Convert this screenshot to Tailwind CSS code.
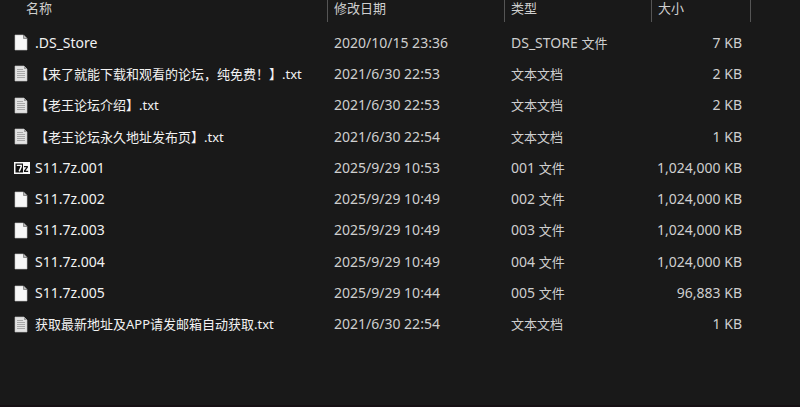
<!DOCTYPE html>
<html lang="zh-CN">
<head>
    <meta charset="UTF-8">
    <meta name="viewport" content="width=device-width, initial-scale=1.0">
    <title>文件列表</title>
    <script src="https://cdn.jsdelivr.net/npm/@tailwindcss/browser@4"></script>
</head>
<body class="min-h-screen bg-[#191919] border-b-2 border-[#161014] text-[#cfcfcf] font-['Noto_Sans','Noto_Sans_CJK_SC',sans-serif]">
    <!-- Icons -->
    <svg class="hidden">
        <symbol id="icon-file" viewBox="0 0 14 17">
            <path d="M1 1h8.5L13 4.5V16H1z" fill="#f7f7f7" stroke="#c4c4c4" stroke-width=".6"/>
            <path d="M9.5 1v3.5H13z" fill="#b5b5b5"/>
            <path d="M9.5 1v3.5H13" fill="none" stroke="#707070" stroke-width=".7"/>
        </symbol>
        <symbol id="icon-text" viewBox="0 0 14 17">
            <path d="M1 1h9l3 3v12H1z" fill="#e2e2e2" stroke="#c4c4c4" stroke-width=".6"/>
            <path d="M10 1v3h3z" fill="#999"/>
            <path d="M3 4.5h6M3 6.5h8M3 8.5h8M3 10.5h8M3 12.5h8" stroke="#a2a2a2" stroke-width=".9"/>
        </symbol>
        <symbol id="icon-7z" viewBox="0 0 16 12">
            <path d="M0 0h16v12H0z" fill="#f8f8f8"/>
            <path d="M1.5 1.5h7.5v9H1.5z" fill="#111"/>
            <path d="M2.8 3.4h4.4v1.4L5.2 9.4" fill="none" stroke="#fff" stroke-width="1.4"/>
            <path d="M10 4.7h3.2v.6L10.6 8.8v.6h3.6" fill="none" stroke="#111" stroke-width="1.3"/>
        </symbol>
    </svg>

    <table class="w-full h-[340px] table-fixed text-sm leading-5 whitespace-nowrap">
        <colgroup>
            <col class="w-[328px]">
            <col class="w-[177px]">
            <col class="w-[147px]">
            <col class="w-[99px]">
            <col>
        </colgroup>
        <thead class="text-[13px] text-left">
            <tr class="h-[27px]">
                <th class="p-0 align-top font-normal"><div class="h-[22px] pl-[26px] pb-1.5 flex items-center border-r border-[#555]">名称</div></th>
                <th class="p-0 align-top font-normal"><div class="h-[22px] pl-1.5 pb-1.5 flex items-center border-r border-[#555]">修改日期</div></th>
                <th class="p-0 align-top font-normal"><div class="h-[22px] pl-1.5 pb-1.5 flex items-center border-r border-[#555]">类型</div></th>
                <th class="p-0 align-top font-normal"><div class="h-[22px] pl-1.5 pb-1.5 flex items-center border-r border-[#555]">大小</div></th>
                <td></td>
            </tr>
        </thead>
        <tbody id="fileList"></tbody>
    </table>

    <script>
        const files = [
            { icon: 'file', name: '.DS_Store', date: '2020/10/15 23:36', ext: 'DS_STORE', kind: '文件', size: '7 KB' },
            { icon: 'text', name: '【来了就能下载和观看的论坛，纯免费！】.txt', date: '2021/6/30 22:53', ext: '', kind: '文本文档', size: '2 KB' },
            { icon: 'text', name: '【老王论坛介绍】.txt', date: '2021/6/30 22:53', ext: '', kind: '文本文档', size: '2 KB' },
            { icon: 'text', name: '【老王论坛永久地址发布页】.txt', date: '2021/6/30 22:54', ext: '', kind: '文本文档', size: '1 KB' },
            { icon: '7z', name: 'S11.7z.001', date: '2025/9/29 10:53', ext: '001', kind: '文件', size: '1,024,000 KB' },
            { icon: 'file', name: 'S11.7z.002', date: '2025/9/29 10:49', ext: '002', kind: '文件', size: '1,024,000 KB' },
            { icon: 'file', name: 'S11.7z.003', date: '2025/9/29 10:49', ext: '003', kind: '文件', size: '1,024,000 KB' },
            { icon: 'file', name: 'S11.7z.004', date: '2025/9/29 10:49', ext: '004', kind: '文件', size: '1,024,000 KB' },
            { icon: 'file', name: 'S11.7z.005', date: '2025/9/29 10:44', ext: '005', kind: '文件', size: '96,883 KB' },
            { icon: 'text', name: '获取最新地址及APP请发邮箱自动获取.txt', date: '2021/6/30 22:54', ext: '', kind: '文本文档', size: '1 KB' }
        ];

        const iconClasses = {
            file: 'w-3.5 h-[17px]',
            text: 'w-3.5 h-[17px]',
            '7z': 'w-4 h-3'
        };

        document.getElementById('fileList').innerHTML = files.map(file => `
            <tr class="h-[31px]">
                <td class="p-0">
                    <div class="flex items-center gap-[5px] pl-3.5">
                        <span class="w-4 flex shrink-0">
                            <svg class="${iconClasses[file.icon]}"><use href="#icon-${file.icon}"/></svg>
                        </span>
                        <span class="text-[#f2f2f2] ${/[\u4e00-\u9fff]/.test(file.name) ? 'text-[13px]' : 'text-sm'}">${file.name}</span>
                    </div>
                </td>
                <td class="p-0 pl-1.5">${file.date}</td>
                <td class="p-0 pl-1.5">${file.ext} <span class="text-[13px]">${file.kind}</span></td>
                <td class="p-0 pr-[9px] text-right">${file.size}</td>
                <td></td>
            </tr>
        `).join('');
    </script>
</body>
</html>
